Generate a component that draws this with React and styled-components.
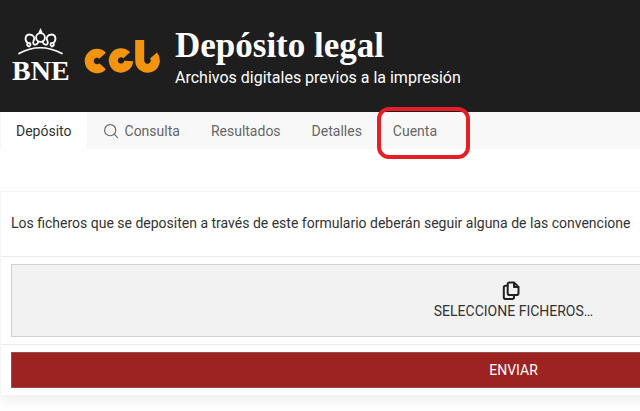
import { useState } from 'react'
import styled, { createGlobalStyle } from 'styled-components'

const GlobalStyle = createGlobalStyle`
  *, *::before, *::after {
    box-sizing: border-box;
  }
  body {
    min-height: 100vh;
    margin: 0;
    overflow: hidden;
    background: #fff;
    color: #333;
    font-family: Roboto, 'Liberation Sans', sans-serif;
    font-size: 14px;
    line-height: 20px;
  }
`

const Page = styled.div`
  min-width: 1028px;
`

const Header = styled.header`
  display: flex;
  align-items: center;
  gap: 15px;
  height: 112px;
  padding: 2px 12px 0;
  background: #1e1e1e;
  color: #fff;
`

const Logos = styled.div`
  display: flex;
  align-items: center;
  gap: 12px;
`

const Logo = styled.svg`
  display: block;
  flex-shrink: 0;
`

const Wordmark = styled.text`
  fill: #fff;
  font-family: 'Liberation Serif', serif;
  font-size: 28px;
  font-weight: 700;
`

const Title = styled.h1`
  margin: 0;
  padding-top: 2px;
  font-family: 'Liberation Serif', serif;
  font-size: 35px;
  font-weight: 700;
  line-height: 40px;
`

const Subtitle = styled.p`
  margin: 0;
  font-size: 16px;
  line-height: 24px;
`

const Nav = styled.nav`
  display: flex;
  gap: 1px;
  padding-left: 1px;
  background: #f8f8f8;
`

const Tab = styled.a`
  display: flex;
  align-items: center;
  gap: 6px;
  height: 37px;
  padding: 0 15px;
  background: ${(props) => (props.$active ? '#fff' : 'transparent')};
  color: ${(props) => (props.$active ? '#333' : '#666')};
  text-decoration: none;
`

const Marked = styled.span`
  position: relative;
  &::after {
    content: '';
    position: absolute;
    inset: -14px -33px -18px -16px;
    border: 4px solid #e61e26;
    border-radius: 12px;
    pointer-events: none;
  }
`

const Panel = styled.form`
  margin-top: 42px;
  border-top: 1px solid #f5f5f5;
  border-left: 1px solid #f5f5f5;
  box-shadow: 0 5px 15px rgba(0, 0, 0, 0.08);
`

const Intro = styled.p`
  margin: 0;
  padding: 21px 10px 23px;
  white-space: nowrap;
`

const Row = styled.div`
  padding: 7px 12px 7px 10px;
  border-top: 1px solid #ebebeb;
`

const DropZone = styled.button`
  display: flex;
  flex-direction: column;
  align-items: center;
  justify-content: center;
  width: 100%;
  height: 73px;
  padding: 0;
  border: 1px solid #d2d2d2;
  background: #f2f2f2;
  color: #333;
  font: inherit;
  text-transform: uppercase;
  svg {
    margin-right: 5px;
  }
`

const Submit = styled.button`
  display: block;
  width: 100%;
  height: 36px;
  padding: 0;
  border: 1px solid #a04a49;
  background: #9c2322;
  color: #fff;
  font: inherit;
  text-transform: uppercase;
`

function BneLogo() {
  return (
    <Logo width="60" height="58" viewBox="0 0 60 58" role="img" aria-label="BNE">
      <g fill="none" stroke="#fff" strokeLinecap="round">
        <path d="M7 25.500Q28 14 50 25.500" strokeWidth="1.700" />
        <g strokeWidth="1.800">
          <circle cx="28.500" cy="9.500" r="4.400" />
          <path d="M17 18.500C14 17.500 15 15 17 15C19 15 19 18 17 18.500M15.500 15C12 11.500 13.500 6.500 17.500 6.500C21.500 6.500 23.500 10 21.500 13C20.500 15.500 22 17.500 24 16.500C26 15.500 26.500 14 26 13.500" />
          <path d="M40 18.500C43 17.500 42 15 40 15C38 15 38 18 40 18.500M41.500 15C45 11.500 43.500 6.500 39.500 6.500C35.500 6.500 33.500 10 35.500 13C36.500 15.500 35 17.500 33 16.500C31 15.500 30.500 14 31 13.500" />
        </g>
      </g>
      <path d="M28.500 0L30.600 4.500L28.500 6L26.400 4.500Z" fill="#fff" />
      <Wordmark x="0" y="52">
        BNE
      </Wordmark>
    </Logo>
  )
}

function CclLogo() {
  return (
    <Logo width="76" height="34" viewBox="0 0 76 34" aria-hidden="true">
      <g fill="none" stroke="#f39410" strokeWidth="9">
        <path d="M18.600 15.800A7.700 7.700 0 1 0 18.600 26.200" />
        <path d="M42.700 15.200A7.700 7.700 0 1 0 44.700 21" />
        <path d="M55.700 0V20.500A7.800 7.800 0 1 0 69.500 15.500" />
      </g>
    </Logo>
  )
}

function SearchIcon() {
  return (
    <svg width="16" height="16" viewBox="0 0 20 20" aria-hidden="true">
      <g fill="none" stroke="currentColor" strokeWidth="1.4">
        <circle cx="9" cy="9" r="7" />
        <path d="M14 14L18.500 18.500" />
      </g>
    </svg>
  )
}

function FilesIcon() {
  return (
    <svg width="18" height="20" viewBox="0 0 18 20" aria-hidden="true">
      <g
        fill="none"
        stroke="#222"
        strokeWidth="2"
        strokeLinejoin="round"
        strokeLinecap="round"
      >
        <path d="M12 1.500H7.500A1.800 1.800 0 0 0 5.700 3.300V12.200A1.800 1.800 0 0 0 7.500 14H14.700A1.800 1.800 0 0 0 16.500 12.200V6Z" />
        <path d="M12 1.700V6H16.300" />
        <path d="M5.500 4.700H3.600A1.800 1.800 0 0 0 1.800 6.500V16.200A1.800 1.800 0 0 0 3.600 18H10.200A1.800 1.800 0 0 0 12 16.200V14.200" />
      </g>
    </svg>
  )
}

const tabs = [
  { id: 'deposito', label: 'Depósito' },
  { id: 'consulta', label: 'Consulta', icon: <SearchIcon /> },
  { id: 'resultados', label: 'Resultados' },
  { id: 'detalles', label: 'Detalles' },
  { id: 'cuenta', label: 'Cuenta', marked: true },
]

function App() {
  const [active, setActive] = useState('deposito')
  return (
    <>
      <GlobalStyle />
      <Page>
        <Header>
          <Logos>
            <BneLogo />
            <CclLogo />
          </Logos>
          <div>
            <Title>Depósito legal</Title>
            <Subtitle>Archivos digitales previos a la impresión</Subtitle>
          </div>
        </Header>
        <Nav>
          {tabs.map(({ id, label, icon, marked }) => {
            const Label = marked ? Marked : 'span'
            return (
              <Tab
                key={id}
                href={`#${id}`}
                $active={id === active}
                onClick={() => setActive(id)}
              >
                {icon}
                <Label>{label}</Label>
              </Tab>
            )
          })}
        </Nav>
        <Panel onSubmit={(e) => e.preventDefault()}>
          <Intro>
            Los ficheros que se depositen a través de este formulario deberán
            seguir alguna de las convencione
          </Intro>
          <Row>
            <DropZone type="button">
              <FilesIcon />
              Seleccione ficheros…
            </DropZone>
          </Row>
          <Row>
            <Submit type="submit">Enviar</Submit>
          </Row>
        </Panel>
      </Page>
    </>
  )
}

export default App
